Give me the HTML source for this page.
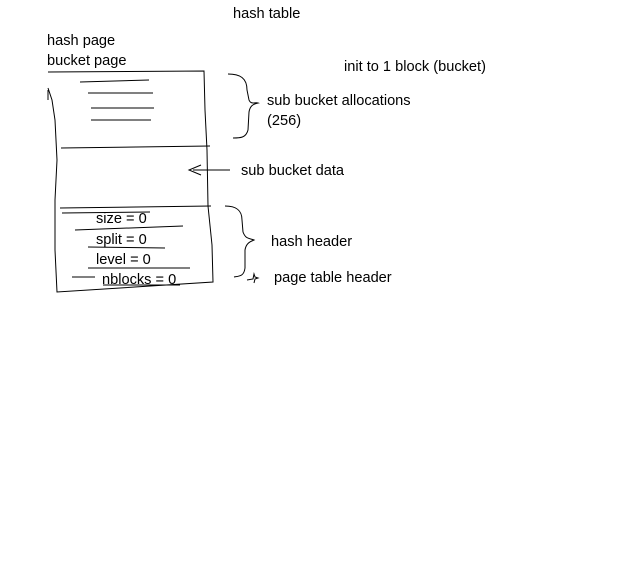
<!DOCTYPE html><html><head><style>body{margin:0;background:#fff}svg{display:block}text{font-family:"Liberation Sans",sans-serif;font-size:14.6px;fill:#000}</style></head><body>
<svg width="633" height="586" viewBox="0 0 633 586">
<g fill="none" stroke="#000" stroke-width="1">
<polyline points="48,72 204,71 205,110 207,150 208,206 212,245 213,282 57,292 55,250 55,200 57,160 55,120 52,100 48,88"/>
<polyline points="48,90 48,100"/>
<line x1="61" y1="148" x2="210" y2="146"/>
<line x1="60" y1="208" x2="211" y2="206"/>
<line x1="80" y1="82" x2="149" y2="80"/>
<line x1="88" y1="93" x2="153" y2="93"/>
<line x1="91" y1="108" x2="154" y2="108"/>
<line x1="91" y1="120" x2="151" y2="120"/>
<line x1="62" y1="213" x2="150" y2="212"/>
<line x1="75" y1="230" x2="183" y2="226"/>
<line x1="88" y1="247" x2="165" y2="248"/>
<line x1="88" y1="268" x2="190" y2="268"/>
<line x1="72" y1="277" x2="95" y2="277"/>
<line x1="103" y1="285" x2="180" y2="285"/>
<path d="M228,74 C240,74 247,78 247,90 L249,100 C251,105 255,102 258,103 C253,104 250,106 249,112 L248,130 C246,138 240,138 233,138"/>
<path d="M225,206 C236,206 242,210 242,220 L243,232 C246,240 250,238 254,240 C249,242 246,244 245,250 L245,268 C244,276 240,276 234,277"/>
<path d="M247,280 L253,279 L254,274 L255,277 L258,278 L255,279 L254,283"/>
<line x1="193" y1="170" x2="230" y2="170"/>
<polyline points="201,165 189,170 201,175"/>
</g>
<text x="233" y="18">hash table</text>
<text x="47" y="45">hash page</text>
<text x="47" y="65">bucket page</text>
<text x="344" y="71">init to 1 block (bucket)</text>
<text x="267" y="105">sub bucket allocations</text>
<text x="267" y="125">(256)</text>
<text x="241" y="175">sub bucket data</text>
<text x="96" y="223">size = 0</text>
<text x="96" y="244">split = 0</text>
<text x="96" y="264">level = 0</text>
<text x="102" y="284">nblocks = 0</text>
<text x="271" y="246">hash header</text>
<text x="274" y="282">page table header</text>
</svg></body></html>
